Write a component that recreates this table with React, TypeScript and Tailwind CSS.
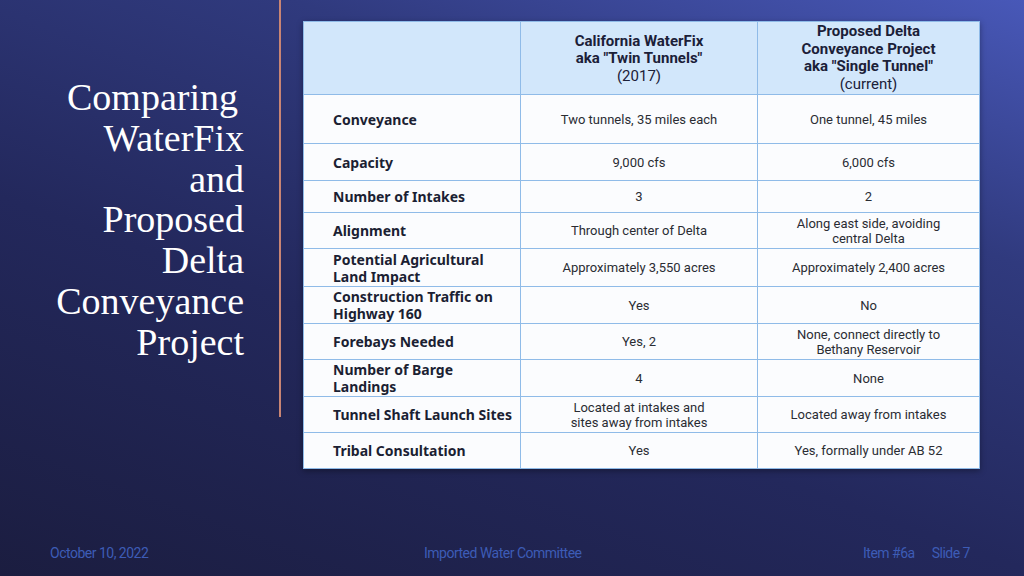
import type { ReactNode } from 'react';

type Row = { label: ReactNode; a: ReactNode; b: ReactNode; h: string };

const rows: Row[] = [
  { label: 'Conveyance', a: 'Two tunnels, 35 miles each', b: 'One tunnel, 45 miles', h: 'h-[49px]' },
  { label: 'Capacity', a: '9,000 cfs', b: '6,000 cfs', h: 'h-[37px]' },
  { label: 'Number of Intakes', a: '3', b: '2', h: 'h-[32px]' },
  {
    label: 'Alignment',
    a: 'Through center of Delta',
    b: (
      <>
        Along east side, avoiding
        <br />
        central Delta
      </>
    ),
    h: 'h-[36px]',
  },
  {
    label: (
      <>
        Potential Agricultural
        <br />
        Land Impact
      </>
    ),
    a: 'Approximately 3,550 acres',
    b: 'Approximately 2,400 acres',
    h: 'h-[38px]',
  },
  {
    label: (
      <>
        Construction Traffic on
        <br />
        Highway 160
      </>
    ),
    a: 'Yes',
    b: 'No',
    h: 'h-[37px]',
  },
  {
    label: 'Forebays Needed',
    a: 'Yes, 2',
    b: (
      <>
        None, connect directly to
        <br />
        Bethany Reservoir
      </>
    ),
    h: 'h-[36px]',
  },
  {
    label: (
      <>
        Number of Barge
        <br />
        Landings
      </>
    ),
    a: '4',
    b: 'None',
    h: 'h-[37px]',
  },
  {
    label: 'Tunnel Shaft Launch Sites',
    a: (
      <>
        Located at intakes and
        <br />
        sites away from intakes
      </>
    ),
    b: 'Located away from intakes',
    h: 'h-[36px]',
  },
  { label: 'Tribal Consultation', a: 'Yes', b: 'Yes, formally under AB 52', h: 'h-[36px]' },
];

const titleLines = ['Comparing', 'WaterFix', 'and', 'Proposed', 'Delta', 'Conveyance', 'Project'];

export default function App() {
  return (
    <div className="relative flex h-[576px] w-[1024px] flex-col overflow-hidden bg-[linear-gradient(20deg,#1b1d40_0%,#23285c_40%,#303a7e_72%,#4858b8_100%)]">
      <div className="flex h-[530px]">
        {/* title */}
        <div className="w-[279px] pr-[35px] pt-[77px] text-right font-['Liberation_Serif',serif] text-[38px] leading-[40.8px] text-white">
          {titleLines.map((l, i) => (
            <div key={l} className={i === 0 ? 'pr-[6px]' : ''}>
              {l}
            </div>
          ))}
        </div>
        <div className="h-[417px] w-[2px] bg-[#c98574]" />

        {/* table */}
        <div className="ml-[22px] mt-[21px]">
          <table className="w-[676px] table-fixed border-collapse border border-[#8fbbe8] bg-[#fbfcfe] shadow-[0_2px_6px_rgba(0,0,0,0.35)]">
            <colgroup>
              <col className="w-[217px]" />
              <col className="w-[237px]" />
              <col className="w-[222px]" />
            </colgroup>
            <thead>
              <tr className="h-[73px] bg-[#d2e7fb] text-center font-['Roboto',sans-serif] text-[15px] leading-[17.5px] text-[#1b2038]">
                <th className="border border-[#8fbbe8] pt-[2px]"></th>
                <th className="border border-[#8fbbe8] pt-[2px]">
                  <div className="font-bold">California WaterFix</div>
                  <div className="font-bold">aka "Twin Tunnels"</div>
                  <div className="font-normal">(2017)</div>
                </th>
                <th className="border border-[#8fbbe8]">
                  <div className="font-bold">Proposed Delta</div>
                  <div className="font-bold">Conveyance Project</div>
                  <div className="font-bold">aka "Single Tunnel"</div>
                  <div className="font-normal">(current)</div>
                </th>
              </tr>
            </thead>
            <tbody>
              {rows.map((r, i) => (
                <tr key={i} className={r.h}>
                  <td className="border border-[#8fbbe8] pl-[29px] text-left font-['Noto_Sans',sans-serif] text-[14px] font-bold leading-[17px] text-[#1b1f33]">
                    {r.label}
                  </td>
                  <td className="border border-[#8fbbe8] pt-[1px] text-center font-['Roboto',sans-serif] text-[13px] leading-[15.5px] text-[#2a2c33]">
                    {r.a}
                  </td>
                  <td className="border border-[#8fbbe8] pt-[1px] text-center font-['Roboto',sans-serif] text-[13px] leading-[15.5px] text-[#2a2c33]">
                    {r.b}
                  </td>
                </tr>
              ))}
            </tbody>
          </table>
        </div>
      </div>

      {/* footer */}
      <div className="flex items-center pl-[50px] pt-[13px] font-['Roboto',sans-serif] text-[14px] tracking-[-0.5px] text-[#3d5cb6]">
        <span className="w-[374px]">October 10, 2022</span>
        <span className="w-[439px]">Imported Water Committee</span>
        <span>Item #6a</span>
        <span className="ml-[17px]">Slide 7</span>
      </div>
    </div>
  );
}
